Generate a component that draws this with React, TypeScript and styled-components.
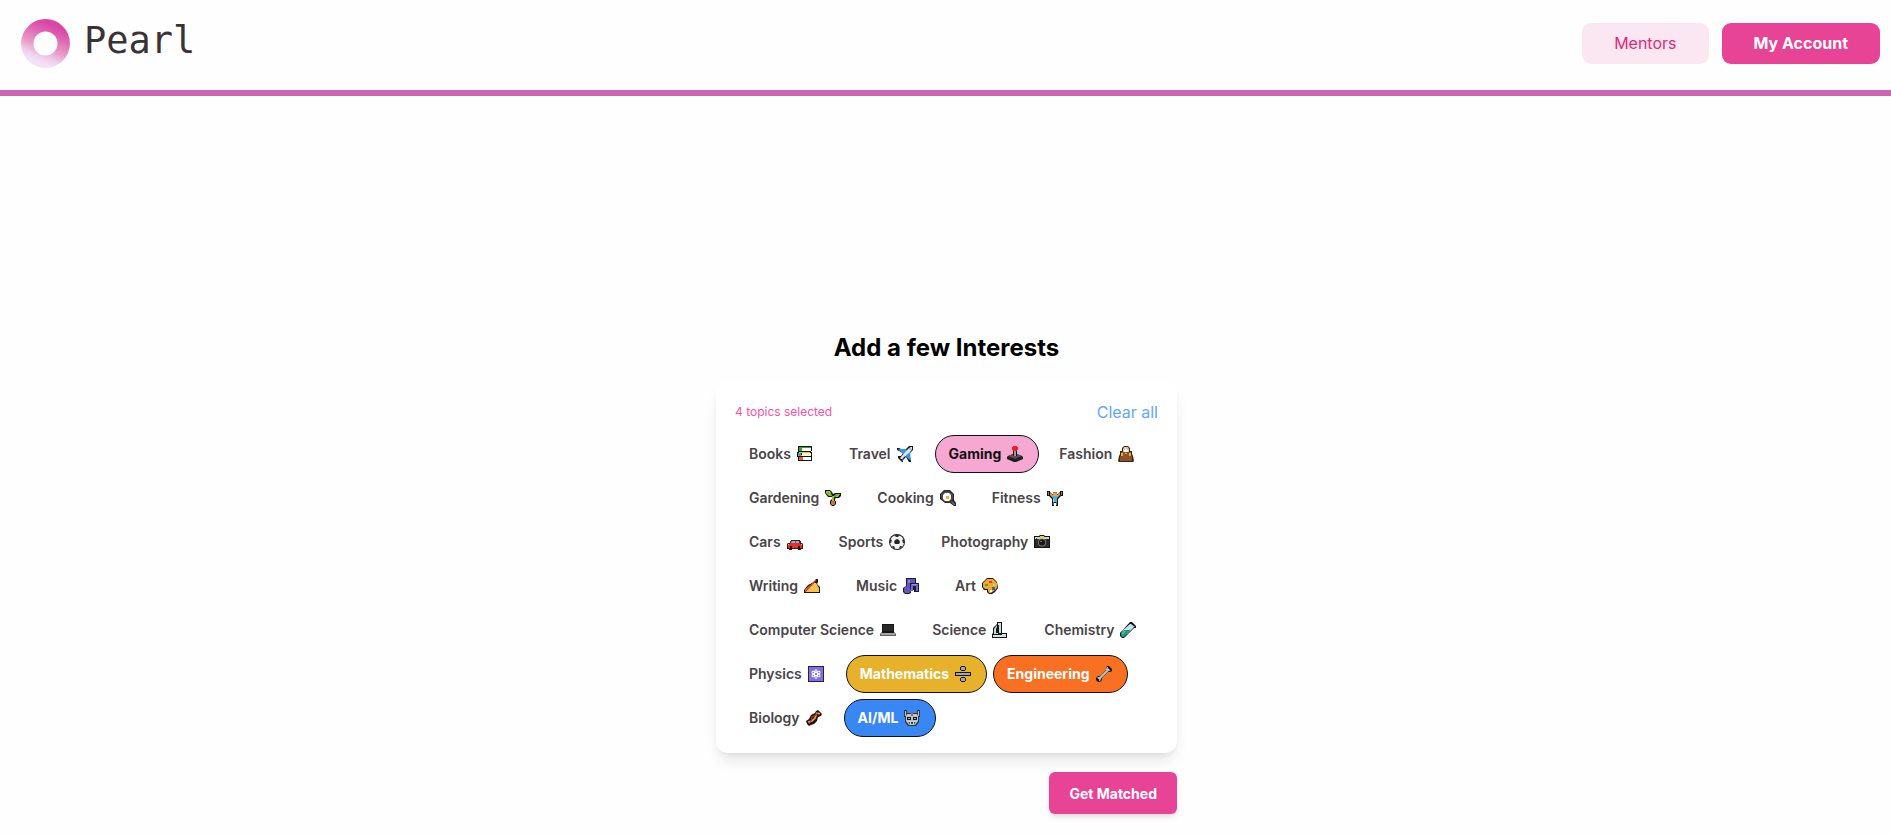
import React, { useState } from 'react';
import styled, { createGlobalStyle, css } from 'styled-components';

const GlobalStyle = createGlobalStyle`
  *, *::before, *::after { box-sizing: border-box; }
  body {
    margin: 0;
    background: #fefefe;
    color: #000;
    font-family: Inter, "Liberation Sans", sans-serif;
    font-size: 16px;
    line-height: 24px;
  }
  button { font-family: inherit; cursor: pointer; }
`;

const Header = styled.header`
  display: flex;
  align-items: center;
  justify-content: space-between;
  height: 96px;
  padding: 0 11px 4px 21px;
  border-bottom: 6px solid #cf62b1;
`;

const Brand = styled.a`
  display: flex;
  align-items: center;
  gap: 14px;
  color: #3b3236;
  font-family: "DejaVu Sans Mono", monospace;
  font-size: 37px;
  line-height: 48px;
  text-decoration: none;
`;

const BrandName = styled.span`
  padding-bottom: 4px;
`;

const Nav = styled.nav`
  display: flex;
  gap: 13px;
`;

const NavButton = styled.button<{ $primary?: boolean }>`
  height: 41px;
  padding: 0 32px;
  border: 0;
  border-radius: 9px;
  font-size: 16px;
  font-weight: ${(p) => (p.$primary ? 700 : 400)};
  color: ${(p) => (p.$primary ? '#fff' : '#dc2a7c')};
  background: ${(p) => (p.$primary ? '#e84495' : '#fbe7f2')};
`;

const Main = styled.main`
  display: flex;
  flex-direction: column;
  width: 100%;
  max-width: 463px;
  margin: 0 auto;
  padding: 236px 0 16px 2px;
`;

const Title = styled.h1`
  margin: 0 0 17px;
  font-size: 24px;
  line-height: 32px;
  font-weight: 700;
  text-align: center;
`;

const Card = styled.section`
  padding: 16px 19px;
  border-radius: 12px;
  background: #fff;
  box-shadow: 0 10px 15px -3px rgba(0, 0, 0, 0.1), 0 4px 6px -4px rgba(0, 0, 0, 0.1);
`;

const CardHeader = styled.div`
  display: flex;
  align-items: center;
  justify-content: space-between;
  height: 30px;
  margin-bottom: 8px;
`;

const Count = styled.span`
  font-size: 12px;
  line-height: 16px;
  color: #f752a5;
`;

const ClearButton = styled.button`
  padding: 0;
  border: 0;
  background: none;
  font-size: 16px;
  line-height: 24px;
  color: #62a8f7;
`;

const Chips = styled.div`
  display: flex;
  flex-wrap: wrap;
  gap: 6px;
`;

const Chip = styled.button<{ $fill?: string; $ink?: string }>`
  display: flex;
  align-items: center;
  gap: 6px;
  height: 38px;
  padding: 0 15px 0 13px;
  border: 1px solid transparent;
  border-radius: 19px;
  background: none;
  font-size: 14px;
  line-height: 20px;
  font-weight: 600;
  color: #4a4447;
  white-space: nowrap;
  ${(p) =>
    p.$fill &&
    css`
      border-color: #111;
      background: ${p.$fill};
      color: ${p.$ink};
      font-weight: 700;
    `}
`;

const Submit = styled.button`
  align-self: flex-end;
  height: 42px;
  margin-top: 19px;
  padding: 0 20px;
  border: 0;
  border-radius: 6px;
  background: #e84495;
  color: #fff;
  font-size: 14px;
  font-weight: 700;
  box-shadow: 0 4px 6px -1px rgba(0, 0, 0, 0.1), 0 2px 4px -2px rgba(0, 0, 0, 0.1);
`;

const Glyph = styled.svg`
  display: block;
  flex: none;
  width: 16px;
  height: 16px;
`;

const K = '#151515';

const art: Record<string, React.ReactNode> = {
  Books: (
    <>
      <path d="M1 0h14v5h-1v1h1v9H1v-4H0V6h1z" fill={K} />
      <path d="M2 1h12v1H5v2h9v1H2z" fill="#2fa82f" /><path d="M5 2h9v3H5z" fill="#fff" />
      <path d="M2 6h11v1H4v2h9v1H2z" fill="#f1b92d" /><path d="M5 7h9v3H5z" fill="#f3f3e4" />
      <path d="M1 7h3v3H1z" fill="#3f9bea" /><path d="M2 11h12v3H2z" fill="#f1592a" />
      <path d="M6 11h8v3H6z" fill="#fff" />
    </>
  ),
  Travel: (
    <>
      <path d="M0 2h2l2 1h5l3-3h4v4l-3 3v5l1 2v2h-2l-3-5-3 3v2H5l-2-2-2-2v-2h3l2-3-6-3z" fill={K} />
      <path d="M1 3l8 0 2 3-4 3zM14 15l-1-9-3-1-2 5z" fill="#3c93e2" />
      <path d="M1 10h4v3l1 3v-4l-1-2z" fill="#3c93e2" />
      <path d="M4 13l-1-1 9-10 2-1h1v2l-1 2-9 8z" fill="#dbe9f5" />
      <path d="M12 2h2v2h-1z" fill="#79bdf2" />
    </>
  ),
  Gaming: (
    <>
      <path d="M6 5h4v3l5 2 1 1v2l-7 3H7l-7-3v-2l1-1 5-2z" fill={K} />
      <path d="M6 0h4v1h1v3h-1v1H6V4H5V1h1z" fill="#e6212e" /><path d="M7 5h2v5H7z" fill="#9b9b9b" />
      <path d="M1 10l5-2v2h4V8l5 2-7 3z" fill="#555" />
      <path d="M1 11l7 3 7-3v1l-7 3-7-3z" fill="#303030" />
      <path d="M3 9h2v2H3z" fill="#d92332" />
    </>
  ),
  Fashion: (
    <>
      <path d="M6 0h4l2 2v3h2v3l1 2 1 5-1 1H1l-1-1 1-5 1-2V5h2V2z" fill="#3b2412" />
      <path d="M6 1h4l1 2v3h-1V4L9 3H7L6 4v2H5V3z" fill="#d8c8b0" />
      <path d="M6 4l1-1h2l1 1v2H6z" fill="#fff" />
      <path d="M3 6h10v3l1 2v4H2v-4l1-2z" fill="#8c542c" />
      <path d="M3 7h2v3H3zM11 7h2v3h-2zM7 7h2v1H7z" fill="#f2ad31" />
    </>
  ),
  Gardening: (
    <>
      <path d="M0 0h5l2 2 1 2 2-1h6v3l-2 2h-3l-1 1v2h1v3l-2 2H7l-2-2v-3l2-2V7H3L0 3z" fill={K} />
      <path d="M1 1h4l1 2 1 3H4L1 3zM9 6l2-2h4l-2 3H9z" fill="#97c83a" />
      <path d="M2 2l5 3v1L3 3zM9 6l5-2-4 3z" fill="#568f24" />
      <path d="M7 6h2v5H7z" fill="#8fc13a" /><path d="M6 11h4v3l-1 1H7l-1-1z" fill="#df6c29" />
    </>
  ),
  Cooking: (
    <>
      <path d="M4 0h6l4 4v6l2 3v3h-2l-4-3H5l-5-4V4z" fill="#282828" />
      <path d="M5 1h4l4 3v5l-3 3H5L1 8V4z" fill="#484848" />
      <path d="M5 3h4l2 2v4l-2 2H5L3 9V5z" fill="#fff" />
      <path d="M6 6h3v3H6z" fill="#f4b335" />
      <path d="M12 11l3 3v1h-1l-3-3z" fill="#6a6a6a" />
    </>
  ),
  Fitness: (
    <>
      <path d="M0 1h3v1l2 2h1V2h4v2h1l2-2V1h3v5h-2l-3 3v7H9v-3H7v3H5V9L2 6H0z" fill={K} />
      <path d="M1 2h1v3H1zM14 2h1v3h-1zM6 2h4v1H6z" fill="#788086" />
      <path d="M3 3l3 2V3h4v2l3-2v2l-3 3H6L3 5z" fill="#e8a23a" />
      <path d="M6 6h4v6H6z" fill="#3eb6e8" /><path d="M6 12h1v3H6zM9 12h1v3H9z" fill="#8d6038" />
      <path d="M6 9h1v3H6z" fill="#a0e1f4" />
    </>
  ),
  Cars: (
    <>
      <path d="M4 6h9v1h1v2h1l1 1v5h-2v1h-3v-1H5v1H2v-1H0v-5l1-1h2V7h1z" fill="#471717" />
      <path d="M4 7h8l1 3h2v4H1v-4h2z" fill="#dc3428" />
      <path d="M5 7h3v2H4zM9 7h3v2H9z" fill="#5cc4ed" />
      <path d="M1 10h1v1H1zM14 10h1v1h-1z" fill="#f7c33e" />
      <path d="M3 12h2v3H3zM11 12h2v3h-2z" fill={K} />
    </>
  ),
  Sports: (
    <>
      <circle cx="8" cy="8" r="8" fill="#202020" /><circle cx="8" cy="8" r="7" fill="#f3f3f3" />
      <path d="M6 6l2-1 2 1 1 2-1 2H6L5 8z" fill="#252525" />
      <path d="M5 1h6L9 3H7zM1 5l2 1-1 3H1zM15 5l-2 1 1 3h1zM3 12h2l1 2-1 1zM13 12h-2l-1 2 1 1z" fill="#303030" />
    </>
  ),
  Photography: (
    <>
      <path d="M0 2h5l1-1h4l1 1h5v12H0z" fill={K} /><path d="M1 3h14v2H1z" fill="#d2d5cf" />
      <path d="M6 2h4v2H6z" fill="#f1ce2f" /><path d="M2 4h1v1H2z" fill="#df382d" />
      <path d="M1 5h14v8H1z" fill="#2b2b2b" /><circle cx="8" cy="8.5" r="4" fill="#8a8f8f" />
      <circle cx="8" cy="8.5" r="3.2" fill="#181818" /><path d="M6 7h2v1H6z" fill="#6f7b80" />
    </>
  ),
  Writing: (
    <>
      <path d="M12 1h2v3l-1 2 3 3v6H0v-3l4-5 6-3z" fill={K} />
      <path d="M1 14v-2l4-4 5-3h2l3 5v4z" fill="#f9c24a" />
      <path d="M1 14L12 2" stroke="#d83a2d" strokeWidth="1.4" />
    </>
  ),
  Music: (
    <>
      <path d="M3 0h10v5h3v9h-5v-2H8v3l-2 1H2l-2-2v-4l3-2z" fill="#191a45" />
      <path d="M4 1h8v4H7v4l1 4-2 2H2l-1-2v-3l3-2z" fill="#6558b2" />
      <path d="M5 2h2v3H5z" fill="#8b80d5" />
      <path d="M8 6h7v7h-2V8h-3v5H8z" fill="#7668c4" />
      <path d="M9 6h5v1H9z" fill="#9a90df" />
    </>
  ),
  Art: (
    <>
      <path d="M5 0h6l4 4 1 6-3 4-3 2H7l-2-2v-2H2L0 9V5z" fill={K} />
      <path d="M5 1h6l4 4v5l-3 3-3 2H7l-1-2v-2H3L1 9V5z" fill="#efaa29" />
      <path d="M3 6h3v2H3z" fill="#37ab43" /><path d="M7 3h3v2H7z" fill="#dc4035" />
      <path d="M11 6h2v2h-2z" fill="#ffc94d" /><path d="M10 9h3v3h-3z" fill="#2867bc" />
      <path d="M8 12h2v2H8z" fill="#fff" />
    </>
  ),
  'Computer Science': (
    <>
      <path d="M2 2h12v8l2 2v2H0v-2l2-2z" fill="#626262" />
      <path d="M2 2h12v9H2z" fill={K} /><path d="M3 3h10v6H3z" fill="#292929" />
      <path d="M2 11h12l1 1v1H1v-1z" fill="#a5a8a8" />
    </>
  ),
  Science: (
    <>
      <path d="M5 0h5v11h5v5H0v-4l1-1V6l4-4z" fill={K} />
      <path d="M6 1h3v2H6zM7 3h2v8H7z" fill="#ccdcdf" />
      <path d="M2 7l3-4v2L4 7v4h2v1H2z" fill="#ccdcdf" />
      <path d="M1 13h9v-1h4v3H1z" fill="#d2e0e2" />
    </>
  ),
  Chemistry: (
    <>
      <path d="M10 0h2l4 4v2h-2l-9 9-1 1H2l-2-2v-3z" fill={K} />
      <path d="M10 2h1l4 3h-1L7 12H5L2 9z" fill="#c2e4f2" />
      <path d="M4 8h7l-7 7H2l-1-2v-2z" fill="#1c9c7b" /><path d="M4 9h2l-4 4v-2z" fill="#50c79d" />
    </>
  ),
  Physics: (
    <>
      <path d="M0 0h16v16H0z" fill="#26223f" /><path d="M1 1h14v14H1z" fill="#8171da" />
      <g fill="none" stroke="#fff">
        <ellipse cx="8" cy="8" rx="4.5" ry="1.6" transform="rotate(30 8 8)" />
        <ellipse cx="8" cy="8" rx="4.5" ry="1.6" transform="rotate(90 8 8)" />
        <ellipse cx="8" cy="8" rx="4.5" ry="1.6" transform="rotate(150 8 8)" />
      </g>
    </>
  ),
  Mathematics: (
    <>
      <path d="M0 6h16v4H0zM6 0h4v1h1v3h-1v1H6V4H5V1h1zM6 11h4v1h1v3h-1v1H6v-1H5v-3h1z" fill={K} />
      <path d="M1 7h14v2H1zM6 1h4v3H6zM6 12h4v3H6z" fill="#a5a5a5" />
    </>
  ),
  Engineering: (
    <>
      <path d="M11 0h2l3 3v2l-2 1h-2l-6 6v2l-2 2H2l-2-2v-2l2-2h2l6-6V2z" fill={K} />
      <path d="M3 13L13 3" stroke="#b8bdc0" strokeWidth="2.4" />
      <path d="M11 1h1v2l1 1h2l-2 1h-2V4h-1V3zM1 12l1-1h3v2l-1 2H3v-2z" fill="#b8bdc0" />
    </>
  ),
  Biology: (
    <>
      <path d="M10 1l2-1 2 2 2 2-1 2-3 1-1 4-3 3-3 1-2 1-2-2-1-3 3-2 2-4 4-2z" fill={K} />
      <path d="M14 4l-3-1-2 5-3 3-4 1" fill="none" stroke="#e8b430" strokeWidth="1.6" />
      <path d="M12 2l-2 3-4 2-1 4-2 3" fill="none" stroke="#c92d3a" strokeWidth="1.2" />
    </>
  ),
  'AI/ML': (
    <>
      <path d="M0 0h3v3h10V0h3v7h-1v5l-3 4H4l-3-4V7H0z" fill="#343434" />
      <path d="M1 1h1v5H1zM14 1h1v5h-1zM3 4h10l1 2v5l-3 4H5l-3-4V6z" fill="#c0c5c7" />
      <path d="M3 7h4v3H3zM9 7h4v3H9z" fill="#171717" />
      <path d="M4 8h2v1H4zM10 8h2v1h-2z" fill="#3ad2ec" />
      <path d="M7 3h2v3H7z" fill="#e94739" /><path d="M5 12h6v2H5z" fill="#444" />
      <path d="M6 12h1v2H6zM9 12h1v2H9z" fill="#ddd" />
    </>
  ),
};

const fills: Record<string, [string, string]> = {
  Gaming: ['#f6a8d3', '#111111'],
  Mathematics: ['#e8b12c', '#ffffff'],
  Engineering: ['#f97022', '#ffffff'],
  'AI/ML': ['#3986f5', '#ffffff'],
};

const topics = Object.keys(art);

export default function App() {
  const [selected, setSelected] = useState<string[]>(Object.keys(fills));

  const toggle = (name: string) =>
    setSelected((list) => (list.includes(name) ? list.filter((n) => n !== name) : [...list, name]));

  return (
    <>
      <GlobalStyle />
      <Header>
        <Brand href="#">
          <svg width="49" height="49" viewBox="0 0 49 49" aria-hidden="true">
            <defs>
              <linearGradient id="pearl" x1="0.7" y1="0" x2="0.3" y2="1">
                <stop offset="0" stopColor="#dc45a8" />
                <stop offset="0.25" stopColor="#e065b3" />
                <stop offset="0.6" stopColor="#e99bc6" />
                <stop offset="0.85" stopColor="#efcfec" />
                <stop offset="1" stopColor="#f1e2f8" />
              </linearGradient>
            </defs>
            <circle cx="24.5" cy="24.5" r="18.2" fill="none" stroke="url(#pearl)" strokeWidth="12.4" />
          </svg>
          <BrandName>Pearl</BrandName>
        </Brand>
        <Nav>
          <NavButton>Mentors</NavButton>
          <NavButton $primary>My Account</NavButton>
        </Nav>
      </Header>
      <Main>
        <Title>Add a few Interests</Title>
        <Card>
          <CardHeader>
            <Count>{selected.length} topics selected</Count>
            <ClearButton onClick={() => setSelected([])}>Clear all</ClearButton>
          </CardHeader>
          <Chips>
            {topics.map((name) => {
              const on = selected.includes(name);
              const [fill, ink] = fills[name] ?? ['#f6a8d3', '#111111'];
              return (
                <Chip
                  key={name}
                  aria-pressed={on}
                  $fill={on ? fill : undefined}
                  $ink={ink}
                  onClick={() => toggle(name)}
                >
                  {name}
                  <Glyph viewBox="0 0 16 16" aria-hidden="true">{art[name]}</Glyph>
                </Chip>
              );
            })}
          </Chips>
        </Card>
        <Submit>Get Matched</Submit>
      </Main>
    </>
  );
}
